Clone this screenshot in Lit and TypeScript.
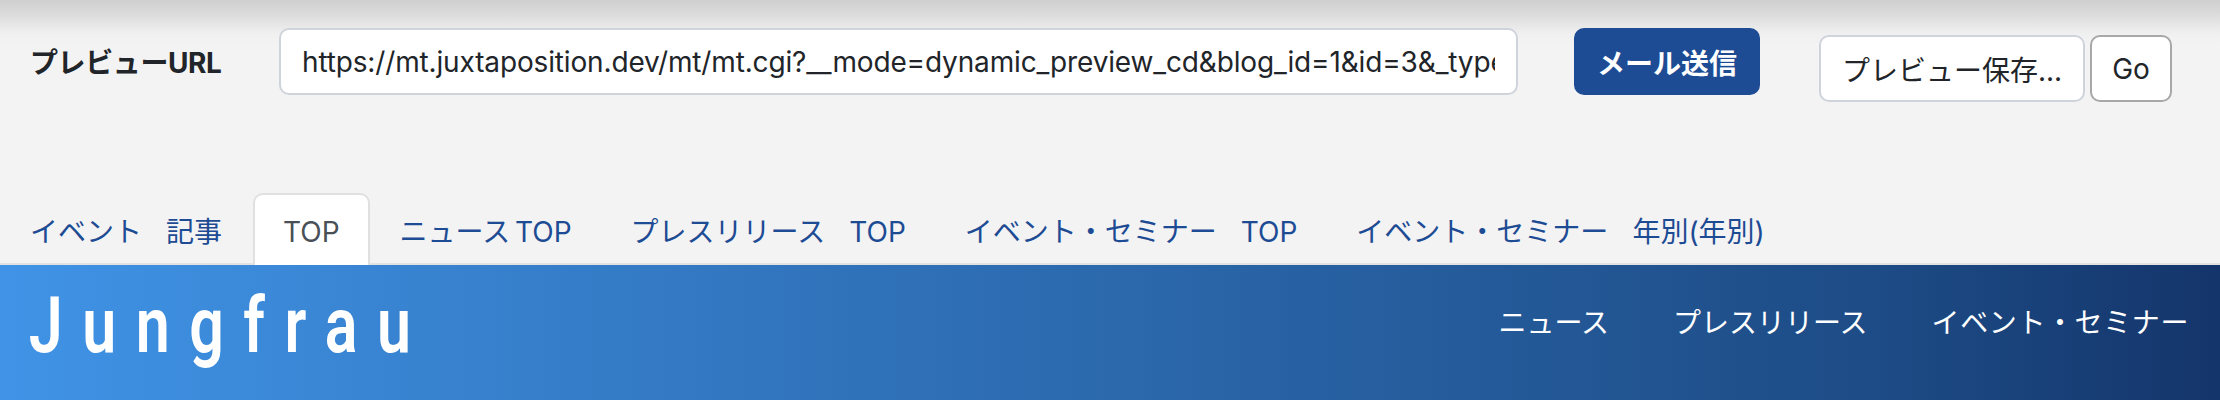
import { LitElement, css, html } from 'lit';
import { customElement } from 'lit/decorators.js';

const TABS = [
  { label: 'イベント　記事', active: false },
  { label: 'TOP', active: true },
  { label: 'ニュース TOP', active: false },
  { label: 'プレスリリース　TOP', active: false },
  { label: 'イベント・セミナー　TOP', active: false },
  { label: 'イベント・セミナー　年別(年別)', active: false },
];

const NAV = ['ニュース', 'プレスリリース', 'イベント・セミナー'];

@customElement('app-root')
export class AppRoot extends LitElement {
  static styles = css`
    :host {
      display: block;
      height: 400px;
      overflow: hidden;
      font-family: Inter, 'Noto Sans CJK JP', sans-serif;
      font-size: 28px;
      color: #212529;
    }
    .preview {
      height: 265px;
      box-sizing: border-box;
      background: linear-gradient(#cfcfcf, #d9d9d9 12px, #e6e6e6 24px, #f0f0f0 34px, #f3f3f3 44px);
      display: flex;
      flex-direction: column;
      justify-content: space-between;
    }
    .toolbar {
      display: flex;
      align-items: flex-start;
      padding: 28px 0 0 30px;
    }
    .label {
      width: 249px;
      font-weight: 700;
      font-size: 28px;
      letter-spacing: -0.4px;
      line-height: 70px;
    }
    .url {
      width: 1239px;
      height: 67px;
      box-sizing: border-box;
      padding: 0 21px;
      border: 2px solid #ced4da;
      border-radius: 10px;
      background: #fff;
      font: inherit;
      letter-spacing: -0.15px;
      color: #212529;
      outline: none;
    }
    .send {
      width: 186px;
      height: 67px;
      margin-left: 56px;
      border: none;
      border-radius: 10px;
      background: #1d4b94;
      color: #fff;
      font: inherit;
      font-weight: 700;
      padding: 0;
    }
    .save {
      display: flex;
      align-items: center;
      justify-content: center;
      width: 266px;
      height: 67px;
      box-sizing: border-box;
      margin: 7px 0 0 59px;
      border: 2px solid #ced4da;
      border-radius: 10px;
      background: #fff;
    }
    .go {
      width: 82px;
      height: 67px;
      margin: 7px 0 0 5px;
      box-sizing: border-box;
      border: 2px solid #a8a8a8;
      border-radius: 10px;
      background: #fff;
      color: #212529;
      font: inherit;
      padding: 0;
    }
    .tabs {
      display: flex;
      border-bottom: 2px solid #e2e2e2;
      color: #1d4b94;
      word-spacing: -3px;
    }
    .tab {
      height: 72px;
      box-sizing: border-box;
      padding: 0 27px 0 28px;
      margin-bottom: -2px;
      border: 2px solid transparent;
      border-bottom: none;
      border-radius: 10px 10px 0 0;
      line-height: 74px;
      white-space: nowrap;
    }
    .tab:first-child {
      padding: 0 29px 0 28px;
    }
    .tab.active {
      background: #fff;
      border-color: #e0e0e0;
      color: #495057;
      padding: 0 28px;
    }
    .wide-space {
      letter-spacing: -4px;
    }
    .masthead {
      height: 135px;
      display: flex;
      justify-content: space-between;
      background: linear-gradient(90deg, #4093e6, #1d4b85 85%, #14356b);
      color: #fff;
    }
    .logo {
      padding: 11px 0 0 37px;
      font-family: Roboto, sans-serif;
      font-weight: 600;
      font-size: 78px;
      line-height: 100px;
      letter-spacing: 25px;
      transform: scaleX(0.78);
      transform-origin: left center;
    }
    .nav {
      display: flex;
      gap: 64px;
      padding: 37px 31px 0 0;
      line-height: 42px;
    }
    .nav span:last-child {
      letter-spacing: 0.6px;
    }
  `;

  // the full-width gap in the tab labels sits a little tighter than one em
  private tabLabel(label: string) {
    const [a, b] = label.split('　');
    return b === undefined
      ? label
      : html`${a}<span class="wide-space">　</span>${b}`;
  }

  render() {
    return html`
      <section class="preview">
        <div class="toolbar">
          <div class="label">プレビューURL</div>
          <input
            class="url"
            readonly
            value="https://mt.juxtaposition.dev/mt/mt.cgi?__mode=dynamic_preview_cd&blog_id=1&id=3&_type=page"
          />
          <button class="send">メール送信</button>
          <div class="save">プレビュー保存...</div>
          <button class="go">Go</button>
        </div>
        <div class="tabs">
          ${TABS.map(
            (t) =>
              html`<div class="tab ${t.active ? 'active' : ''}">${this.tabLabel(t.label)}</div>`,
          )}
        </div>
      </section>
      <header class="masthead">
        <div class="logo">Jungfrau</div>
        <nav class="nav">${NAV.map((n) => html`<span>${n}</span>`)}</nav>
      </header>
    `;
  }
}
